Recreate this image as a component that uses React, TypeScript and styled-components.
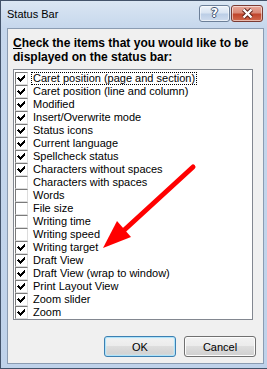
import React from "react";
import styled, { createGlobalStyle } from "styled-components";

const GlobalStyle = createGlobalStyle`
  html, body {
    margin: 0;
    padding: 0;
    background: #ffffff;
  }
  body {
    font-family: "Liberation Sans", Arial, sans-serif;
  }
`;

const Window = styled.div`
  position: relative;
  width: 267px;
  height: 369px;
  box-sizing: border-box;
  border: 1px solid #43536a;
  border-right: none;
  display: flex;
  flex-direction: column;
  background: linear-gradient(to bottom, #dae6f3 0px, #c6d7ec 27px, #bfd2ea 100%);
`;

const TitleBar = styled.div`
  height: 27px;
  display: flex;
  align-items: center;
  padding-left: 6px;
  flex-shrink: 0;
`;

const Title = styled.span`
  font-size: 11px;
  color: #000;
  margin-top: -1px;
`;

const CaptionButtons = styled.div`
  margin-left: auto;
  margin-right: 4px;
  margin-top: -3px;
  display: flex;
  gap: 1px;
`;

const CaptionButton = styled.div<{ $close?: boolean }>`
  width: ${(p) => (p.$close ? "32px" : "31px")};
  height: 17px;
  box-sizing: border-box;
  border: 1px solid ${(p) => (p.$close ? "#7a3b33" : "#6c7f98")};
  border-radius: 3px;
  display: flex;
  align-items: center;
  justify-content: center;
  background: ${(p) =>
    p.$close
      ? "linear-gradient(to bottom, #e9a99b 0%, #d98a78 45%, #c0452c 55%, #d26a4e 100%)"
      : "linear-gradient(to bottom, #eef3fa 0%, #d9e4f2 45%, #bccee6 55%, #cfdcee 100%)"};
  box-shadow: inset 0 0 0 1px rgba(255, 255, 255, 0.55);
`;

const HelpGlyph = styled.span`
  font-family: "DejaVu Sans", sans-serif;
  font-weight: bold;
  font-size: 12px;
  line-height: 12px;
  color: #ffffff;
  text-shadow: -1px 0 #3f5470, 1px 0 #3f5470, 0 -1px #3f5470, 0 1px #3f5470;
`;

const Client = styled.div`
  flex: 1;
  margin: 0 3px 4px 6px;
  border: 1px solid #8b9cb2;
  background: #f0f0f0;
  padding: 7px 7px 0 5px;
  display: flex;
  flex-direction: column;
`;

const Heading = styled.div`
  font-weight: bold;
  font-size: 12px;
  line-height: 14px;
  color: #000;
  width: 244px;
`;

const Mnemonic = styled.span`
  text-decoration: underline;
`;

const ListBox = styled.div`
  margin-top: 5px;
  width: 240px;
  height: 251px;
  box-sizing: border-box;
  border: 1px solid #828790;
  background: #ffffff;
  padding: 2px 0 0 1px;
  overflow: hidden;
`;

const Row = styled.div`
  height: 13px;
  display: flex;
  align-items: center;
  font-size: 11px;
  color: #000;
`;

const Box = styled.div`
  width: 13px;
  height: 13px;
  box-sizing: border-box;
  border-left: 1px solid #7a7a7a;
  border-top: 1px solid #7a7a7a;
  border-right: 1px solid #dcdcdc;
  border-bottom: 1px solid #dcdcdc;
  background: #ffffff;
  display: flex;
  align-items: center;
  justify-content: center;
  flex-shrink: 0;
`;

const Label = styled.span<{ $focus?: boolean }>`
  margin-left: 3px;
  padding: 0 1px;
  line-height: 11px;
  border: 1px ${(p) => (p.$focus ? "dotted #000" : "solid transparent")};
  white-space: nowrap;
`;

const ButtonRow = styled.div`
  margin-top: 16px;
  display: flex;
  justify-content: flex-end;
  gap: 8px;
`;

const Button = styled.div<{ $default?: boolean }>`
  width: 72px;
  height: 21px;
  box-sizing: border-box;
  border: 1px solid ${(p) => (p.$default ? "#3c7fb1" : "#707070")};
  border-radius: 3px;
  display: flex;
  align-items: center;
  justify-content: center;
  font-size: 11px;
  color: #000;
  background: linear-gradient(
    to bottom,
    #f2f2f2 0%,
    #ebebeb 49%,
    #dddddd 50%,
    #cfcfcf 100%
  );
  box-shadow: ${(p) =>
    p.$default
      ? "inset 0 0 0 1px #aee3fa, inset 0 0 2px 1px #d6f0fc"
      : "inset 0 0 0 1px #fcfcfc"};
`;

const Overlay = styled.svg`
  position: absolute;
  left: -1px;
  top: -1px;
  pointer-events: none;
`;

function Check() {
  return (
    <svg width="9" height="9" viewBox="0 0 9 9" shapeRendering="crispEdges">
      <path
        d="M1 3h1v1h1v1h1v-1h1v-1h1v-1h1v-1h1v3h-1v1h-1v1h-1v1h-1v1h-1v-1h-1v-1h-1v-1h-1z"
        fill="#000"
      />
    </svg>
  );
}

const items: [string, boolean][] = [
  ["Caret position (page and section)", true],
  ["Caret position (line and column)", true],
  ["Modified", true],
  ["Insert/Overwrite mode", true],
  ["Status icons", true],
  ["Current language", true],
  ["Spellcheck status", true],
  ["Characters without spaces", true],
  ["Characters with spaces", false],
  ["Words", false],
  ["File size", false],
  ["Writing time", false],
  ["Writing speed", false],
  ["Writing target", true],
  ["Draft View", true],
  ["Draft View (wrap to window)", true],
  ["Print Layout View", true],
  ["Zoom slider", true],
  ["Zoom", true],
];

export default function App() {
  return (
    <>
      <GlobalStyle />
      <Window>
        <TitleBar>
          <Title>Status Bar</Title>
          <CaptionButtons>
            <CaptionButton>
              <HelpGlyph>?</HelpGlyph>
            </CaptionButton>
            <CaptionButton $close>
              <svg width="13" height="11" viewBox="0 0 13 11">
                <path d="M2.5 1.5 L10.5 9.5 M10.5 1.5 L2.5 9.5" stroke="#5a1f17" strokeWidth="4.2" />
                <path d="M2.5 1.5 L10.5 9.5 M10.5 1.5 L2.5 9.5" stroke="#ffffff" strokeWidth="2.4" />
              </svg>
            </CaptionButton>
          </CaptionButtons>
        </TitleBar>
        <Client>
          <Heading>
            <Mnemonic>C</Mnemonic>heck the items that you would like to be
            displayed on the status bar:
          </Heading>
          <ListBox>
            {items.map(([name, checked], i) => (
              <Row key={name}>
                <Box>{checked ? <Check /> : null}</Box>
                <Label $focus={i === 0}>{name}</Label>
              </Row>
            ))}
          </ListBox>
          <ButtonRow>
            <Button $default>OK</Button>
            <Button>Cancel</Button>
          </ButtonRow>
        </Client>
        <Overlay width="267" height="369" viewBox="0 0 267 369">
          <line x1="193" y1="167" x2="121" y2="233" stroke="#ff0000" strokeWidth="5" strokeLinecap="round" />
          <polygon points="103,248 117,221 131,237" fill="#ff0000" />
        </Overlay>
      </Window>
    </>
  );
}
